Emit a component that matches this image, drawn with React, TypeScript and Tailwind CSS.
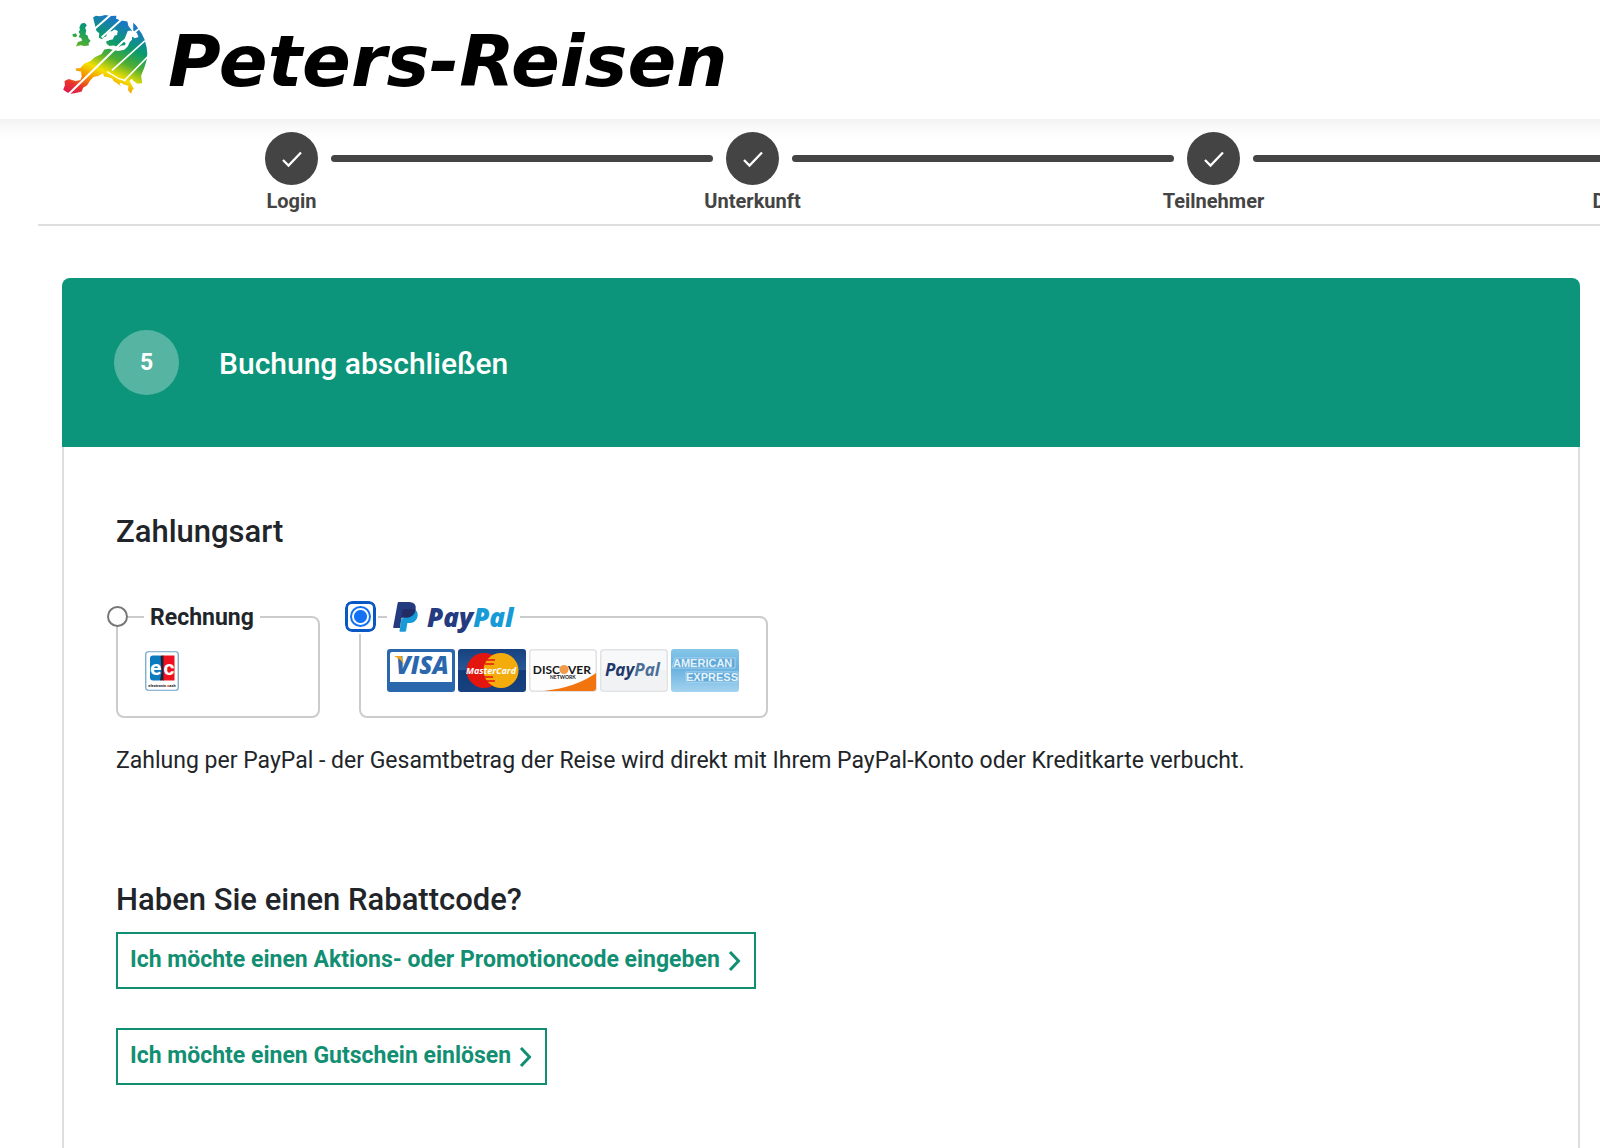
import { useState } from "react";
import { clsx } from "clsx";

const steps = ["Login", "Unterkunft", "Teilnehmer", "Datenüberprüfung"];

function GlobeLogo() {
  return (
    <svg viewBox="0 0 300 285" className="h-[95px] w-[100px] shrink-0" aria-hidden="true">
      <defs>
        <linearGradient id="rainbow" gradientUnits="userSpaceOnUse" x1="12" y1="260" x2="124" y2="21">
          <stop offset="0" stopColor="#e0184a" />
          <stop offset="0.12" stopColor="#e8352c" />
          <stop offset="0.26" stopColor="#f39200" />
          <stop offset="0.4" stopColor="#f4e000" />
          <stop offset="0.58" stopColor="#4fae32" />
          <stop offset="0.76" stopColor="#0a9a6c" />
          <stop offset="1" stopColor="#1a78c2" />
        </linearGradient>
      </defs>
      <g transform="translate(-9 0) scale(1.030 0.965)">
        <g fill="url(#rainbow)">
          <path d="M105 36l8-6 12 2 16-4 14 3 18-1-1 10 12 4 21 4 3 14 10 14-4 16-11 14-5 16-10 1-9 5-14-5-12 1-8-6-2-8 9-4 10-2 6-12 7-2 2-12-9-5-12 8-6 12-14 4-5 6-9-4 1-14-8-7z" />
          <path d="M222 52l8 8 9 14 8 12 8 18 6 24 2 20-2 20-6 22-7 18-3 10 3 22-14 2-12-10-4-6-7 6 7 14 6 12-5 3-3 12-9-11 1-14-13-4-10-6-3 5 5 8-13-12-9-5-4-9-14-4-10-2-3-10-14 9-14 3-10 11-8 14-12 8-4 12-14 4-16 3-12-4-12-9 5-14-1-13 12-6 20 6 14-3 4-10-2-16-14-3-2-7 14-1 12-14 18-8 12-12 20-10 8-14 14-2 12 4 14 3 18-4 10-10 6-14 7-8-2-10 10 6 10-4-4-12-11-8z" />
          <path d="M70 55l10-3 7 8-5 8 3 8-2 12 6 4 3 10 6 6-6 8 1 7-14 1-10-2-14 4 6-14 12-4-2-8-8-4 4-8-4-7 4-8-2-6z" />
          <path d="M45 88l10-3 4 8-6 4-7-2z" />
        </g>
        <g stroke="#fff" fill="none">
          <path strokeWidth="6" d="M102 78l54-50M130 98l60-58" />
          <path strokeWidth="6" d="M32 276L190 112l52-44" />
          <path strokeWidth="5" d="M160 200l96-92M194 234l70-76" />
          <path strokeWidth="4" d="M146 204l34 22 20 6" />
        </g>
        <path fill="#fff" d="M147 84l10-6 8 8-2 12-14 10-8-8zM206 78l10-2 6 14-8 18-14 8-6-6z" />
      </g>
    </svg>
  );
}

function CheckIcon() {
  return (
    <svg viewBox="0 0 24 24" className="size-6" fill="none" stroke="#fff" strokeWidth="2.300" aria-hidden="true">
      <path d="M3 13l5.500 5.500L21 5.500" />
    </svg>
  );
}

function Chevron() {
  return (
    <svg viewBox="0 0 14 22" className="h-[22px] w-[14px]" fill="none" stroke="currentColor" strokeWidth="3" aria-hidden="true">
      <path d="M2 2l8.500 9L2 20" />
    </svg>
  );
}

function EcLogo() {
  return (
    <svg viewBox="0 0 34 40" className="h-10 w-[34px]" role="img" aria-label="electronic cash">
      <rect x="0.750" y="0.750" width="32.500" height="38.500" rx="2.500" fill="#fff" stroke="#6ba3c7" strokeWidth="1.200" />
      <rect x="5" y="4.500" width="12" height="25" rx="3" fill="#0a7bbf" />
      <path d="M18 4.500h11.500v25H18z" fill="#ee1220" />
      <path d="M15.500 4.500h3v25H15l1.500-8z" fill="#1d2430" />
      <text x="5" y="23.500" fontFamily="Roboto, sans-serif" fontWeight="700" fontSize="21" fill="#fff">e</text>
      <text x="18.500" y="23.500" fontFamily="Roboto, sans-serif" fontWeight="700" fontSize="21" fill="#fff">c</text>
      <text x="17" y="36" textAnchor="middle" fontFamily="Roboto, sans-serif" fontWeight="700" fontSize="4" fill="#222">
        electronic <tspan fill="#d11">c</tspan>ash
      </text>
    </svg>
  );
}

function PayPalLogo() {
  return (
    <span className="flex items-center gap-[9px]">
      <svg viewBox="0 0 25 30" className="h-[30px] w-[25px]" aria-hidden="true">
        <path fill="#179bd7" d="M22.500 8c2.500 2 2.700 5 1.600 8-1.500 3.700-4.500 5-8.300 5h-1.400l-1.300 7.600c-.1.800-.6 1.200-1.400 1.200H7.300c-.6 0-.9-.4-.8-1L8.500 17z" />
        <path fill="#253b80" d="M4.600 1.200C4.700.5 5.200 0 6 0h9.300c4.700 0 7.900 2 7.400 6.500-.6 6-4.400 9.100-10.200 9.100H9.800c-.8 0-1.300.5-1.500 1.300L6.900 26H1c-.6 0-.9-.4-.8-1z" />
        <path fill="#222d65" d="M22.600 7.400c-.7 5.400-4.500 8.200-10.100 8.200H9.800c-.8 0-1.300.5-1.500 1.300l-.8 4.800L9.700 8.300c.1-.8.600-1.300 1.400-1.300h7.200c1.700 0 3.100.1 4.300.4z" />
      </svg>
      <span className="font-['Open_Sans',sans-serif] text-[26px]/8 font-extrabold text-[#253b80] italic">
        Pay<span className="text-[#179bd7]">Pal</span>
      </span>
    </span>
  );
}

function VisaCard() {
  return (
    <svg viewBox="0 0 68 43" className="h-[43px] w-[68px]" role="img" aria-label="Visa">
      <rect width="68" height="43" rx="3" fill="#2b67ad" />
      <path d="M3 5q0-2 2-2h58q2 0 2 2v28H3z" fill="#fff" />
      <text x="9" y="25" fontFamily="Open Sans, sans-serif" fontStyle="italic" fontWeight="800" fontSize="24" fill="#2b67ad">VISA</text>
      <path d="M7 7h7.500l2.500 9q-3-6-10-9z" fill="#eba21c" />
    </svg>
  );
}

function MasterCard() {
  return (
    <svg viewBox="0 0 68 43" className="h-[43px] w-[68px]" role="img" aria-label="MasterCard">
      <defs>
        <linearGradient id="mc" x2="0" y2="1">
          <stop offset="0" stopColor="#17427f" />
          <stop offset="0.480" stopColor="#285796" />
          <stop offset="0.500" stopColor="#123a78" />
          <stop offset="1" stopColor="#17427f" />
        </linearGradient>
      </defs>
      <rect width="68" height="43" rx="3" fill="url(#mc)" />
      <circle cx="26" cy="21.500" r="17.500" fill="#e3150f" />
      <circle cx="43" cy="21.500" r="17.500" fill="#f4ac0c" />
      <path d="M29 11h8M27 15h9M26 28h9M28 32h9" stroke="#e3150f" strokeWidth="1.500" />
      <text x="33" y="25" textAnchor="middle" fontFamily="Open Sans, sans-serif" fontStyle="italic" fontWeight="700" fontSize="9" fill="#fff">MasterCard</text>
    </svg>
  );
}

function DiscoverCard() {
  return (
    <svg viewBox="0 0 68 43" className="h-[43px] w-[68px]" role="img" aria-label="Discover Network">
      <rect x="0.750" y="0.750" width="66.500" height="41.500" rx="3" fill="#fdfdfd" stroke="#e2e2e4" strokeWidth="1.500" />
      <path d="M15 42Q48 38 67 24v15q0 3-3 3z" fill="#f2740f" />
      <circle cx="35" cy="20.500" r="4.500" fill="#f09a4a" />
      <g fontFamily="Lato, sans-serif" fill="#161616">
        <text x="31" y="24.500" textAnchor="end" fontWeight="700" fontSize="12">DISC</text>
        <text x="39" y="24.500" fontWeight="700" fontSize="12">VER</text>
        <text x="21" y="30" fontWeight="700" fontSize="5">NETWORK</text>
      </g>
    </svg>
  );
}

function PayPalCard() {
  return (
    <svg viewBox="0 0 68 43" className="h-[43px] w-[68px]" role="img" aria-label="PayPal">
      <rect x="0.750" y="0.750" width="66.500" height="41.500" rx="3" fill="#f7f8fa" stroke="#e2e2e4" strokeWidth="1.500" />
      <path d="M2 21h64v18q0 2-2 2H4q-2 0-2-2z" fill="#f1f2f4" />
      <text x="5" y="27" fontFamily="Open Sans, sans-serif" fontStyle="italic" fontWeight="700" fontSize="17" fill="#22386b">
        Pay<tspan fill="#4a6f97">Pal</tspan>
      </text>
    </svg>
  );
}

function AmexCard() {
  return (
    <svg viewBox="0 0 68 43" className="h-[43px] w-[68px]" role="img" aria-label="American Express">
      <defs>
        <linearGradient id="amex" x2="0" y2="1">
          <stop offset="0" stopColor="#86c6e8" />
          <stop offset="0.450" stopColor="#68b1e0" />
          <stop offset="1" stopColor="#a3d3ef" />
        </linearGradient>
      </defs>
      <rect width="68" height="43" rx="3" fill="url(#amex)" />
      <path d="M4 9h60v10H1zM15 23h52v10H15z" fill="#5fa8d8" stroke="#b7dcf2" strokeWidth="0.800" />
      <g fontFamily="Liberation Sans, sans-serif" fontWeight="700" fontSize="11" fill="#e4f3fb">
        <text x="2" y="18">AMERICAN</text>
        <text x="15" y="32">EXPRESS</text>
      </g>
    </svg>
  );
}

function PaymentRadio({ id, checked, onSelect }: { id: string; checked: boolean; onSelect: () => void }) {
  return (
    <span
      className={clsx(
        "absolute flex items-center justify-center bg-white",
        checked
          ? "-top-[30px] -left-4 size-[31px] rounded-[7px] border-[3px] border-[#0b57c4] outline-2 outline-white"
          : "-top-[25px] -left-[11px] size-[21px] rounded-full",
      )}
    >
      <input
        type="radio"
        id={id}
        name="payment"
        checked={checked}
        onChange={onSelect}
        className={clsx(
          "size-[21px] shrink-0 appearance-none rounded-full border-2 bg-white outline-none",
          checked ? "border-[#1271f5] bg-[radial-gradient(circle,#1271f5_6px,#fff_7px)]" : "border-[#767676]",
        )}
      />
    </span>
  );
}

export default function App() {
  const [payment, setPayment] = useState("paypal");

  return (
    <div className="flex min-h-screen flex-col overflow-x-hidden bg-white font-[Roboto,sans-serif] text-[#212529]">
      <header className="relative flex h-[119px] shrink-0 items-start bg-white pt-[5px] pl-[60px] shadow-[0_-18px_20px_20px_rgba(0,0,0,0.09)]">
        <a href="#" className="flex items-center text-black">
          <GlobeLogo />
          <span className="ml-2 pt-4 font-['DejaVu_Sans',sans-serif] text-7xl/[80px] font-bold whitespace-nowrap italic">
            Peters-Reisen
          </span>
        </a>
      </header>

      <nav className="relative ml-[38px] overflow-hidden border-b-2 border-[#dedede] pt-[13px] pb-[11px] pl-[23px]">
        <ol className="flex">
          {steps.map((step, i) => (
            <li key={step} className="w-[461px] shrink-0 text-center text-[#444]">
              <div className="flex items-center gap-[13px]">
                <span className={clsx("h-[7px] flex-1 rounded-r-full", i > 0 && "bg-[#444]")} />
                <span className="flex size-[53px] items-center justify-center rounded-full bg-[#444]">
                  <CheckIcon />
                </span>
                <span className="h-[7px] flex-1 rounded-l-full bg-[#444]" />
              </div>
              <span className="mt-1 block text-xl/6 font-bold">{step}</span>
            </li>
          ))}
        </ol>
      </nav>

      <main className="mt-[52px] mr-5 ml-[62px] flex flex-1 flex-col">
        <div className="flex items-center rounded-t-lg bg-[#0c957a] px-[52px] py-[52px]">
          <span className="flex size-[65px] items-center justify-center rounded-full bg-white/30 pt-0.5 text-[23px] font-bold text-white">
            5
          </span>
          <h1 className="ml-10 pt-0.5 text-[30px]/9 font-medium text-white">Buchung abschließen</h1>
        </div>

        <div className="flex-1 border-x-2 border-[#dedede] px-[52px] pt-[65px] pb-16">
          <h2 className="text-[31px]/10 font-medium">Zahlungsart</h2>

          <div className="mt-[51px] flex items-stretch gap-[39px]">
            <fieldset className="relative h-[115px] w-[204px] rounded-lg border-2 border-[#ccc]">
              <legend className="ml-[26px] h-7 px-[6px]">
                <label htmlFor="rechnung" className="text-[23px]/[30px] font-bold">
                  Rechnung
                </label>
              </legend>
              <PaymentRadio id="rechnung" checked={payment === "rechnung"} onSelect={() => setPayment("rechnung")} />
              <div className="mt-5 ml-[27px]">
                <EcLogo />
              </div>
            </fieldset>

            <fieldset className="relative h-[115px] w-[409px] rounded-lg border-2 border-[#ccc]">
              <legend className="ml-[26px] h-7 px-[6px]">
                <label htmlFor="paypal" className="flex h-7 items-center">
                  <PayPalLogo />
                </label>
              </legend>
              <PaymentRadio id="paypal" checked={payment === "paypal"} onSelect={() => setPayment("paypal")} />
              <div className="mt-[18px] ml-[26px] flex gap-[3px]">
                <VisaCard />
                <MasterCard />
                <DiscoverCard />
                <PayPalCard />
                <AmexCard />
              </div>
            </fieldset>
          </div>

          <p className="mt-[25px] text-[23px]/9">
            Zahlung per PayPal - der Gesamtbetrag der Reise wird direkt mit Ihrem PayPal-Konto oder Kreditkarte verbucht.
          </p>

          <h2 className="mt-[101px] text-[31px]/10 font-medium">Haben Sie einen Rabattcode?</h2>
          <div className="mt-3 flex flex-col items-start gap-[39px]">
            <button className="flex h-[57px] items-center gap-2 border-2 border-[#128f72] pr-3 pl-3 text-[23px] font-bold text-[#128f72]">
              Ich möchte einen Aktions- oder Promotioncode eingeben
              <Chevron />
            </button>
            <button className="flex h-[57px] items-center gap-2 border-2 border-[#128f72] pr-3 pl-3 text-[23px] font-bold text-[#128f72]">
              Ich möchte einen Gutschein einlösen
              <Chevron />
            </button>
          </div>
        </div>
      </main>
    </div>
  );
}
